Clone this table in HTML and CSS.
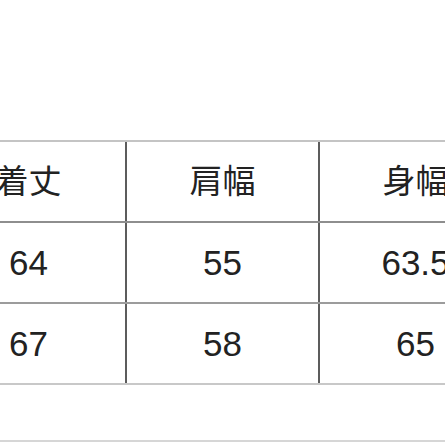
FILE: index.html
```html
<!DOCTYPE html>
<html lang="ja">
<head>
<meta charset="utf-8">
<title>サイズ表</title>
<link rel="stylesheet" href="styles.css">
</head>
<body>
<div class="sheet">
  <div class="row head">
    <div class="cell">着丈</div>
    <div class="cell">肩幅</div>
    <div class="cell">身幅</div>
  </div>
  <div class="row r1">
    <div class="cell">64</div>
    <div class="cell">55</div>
    <div class="cell">63.5</div>
  </div>
  <div class="row r2">
    <div class="cell">67</div>
    <div class="cell">58</div>
    <div class="cell">65</div>
  </div>
  <div class="row end"></div>
</div>
</body>
</html>
```
FILE: styles.css
```css
html, body {
  margin: 0;
  padding: 0;
  background: #ffffff;
}
body {
  width: 445px;
  height: 445px;
  overflow: hidden;
  font-family: "Liberation Sans", "Noto Sans CJK JP", sans-serif;
  color: #222222;
}
.sheet {
  margin-top: 140px;
  margin-left: -68px;
  width: 579px;
}
.row {
  display: grid;
  grid-template-columns: 193px 193px 193px;
  height: 79px;
  border-top: 2px solid #c4c4c4;
}
.row.r1 { border-top: 2px solid #8e8e8e; }
.row.r2 { border-top: 2px solid #9c9c9c; }
.row.end {
  height: 0;
  border-top: 2px solid #c8c8c8;
}
.cell {
  display: flex;
  align-items: center;
  justify-content: center;
  font-size: 35px;
  line-height: 1;
  white-space: nowrap;
}
.cell + .cell {
  border-left: 2px solid #5c5c5c;
}
.head .cell {
  font-family: "Noto Sans CJK JP", sans-serif;
  font-size: 33px;
  padding-bottom: 5px;
  box-sizing: border-box;
}
.sheet::after {
  content: "";
  display: block;
  height: 0;
  margin-top: 55px;
  border-top: 2px solid #d6d6d6;
}
```
